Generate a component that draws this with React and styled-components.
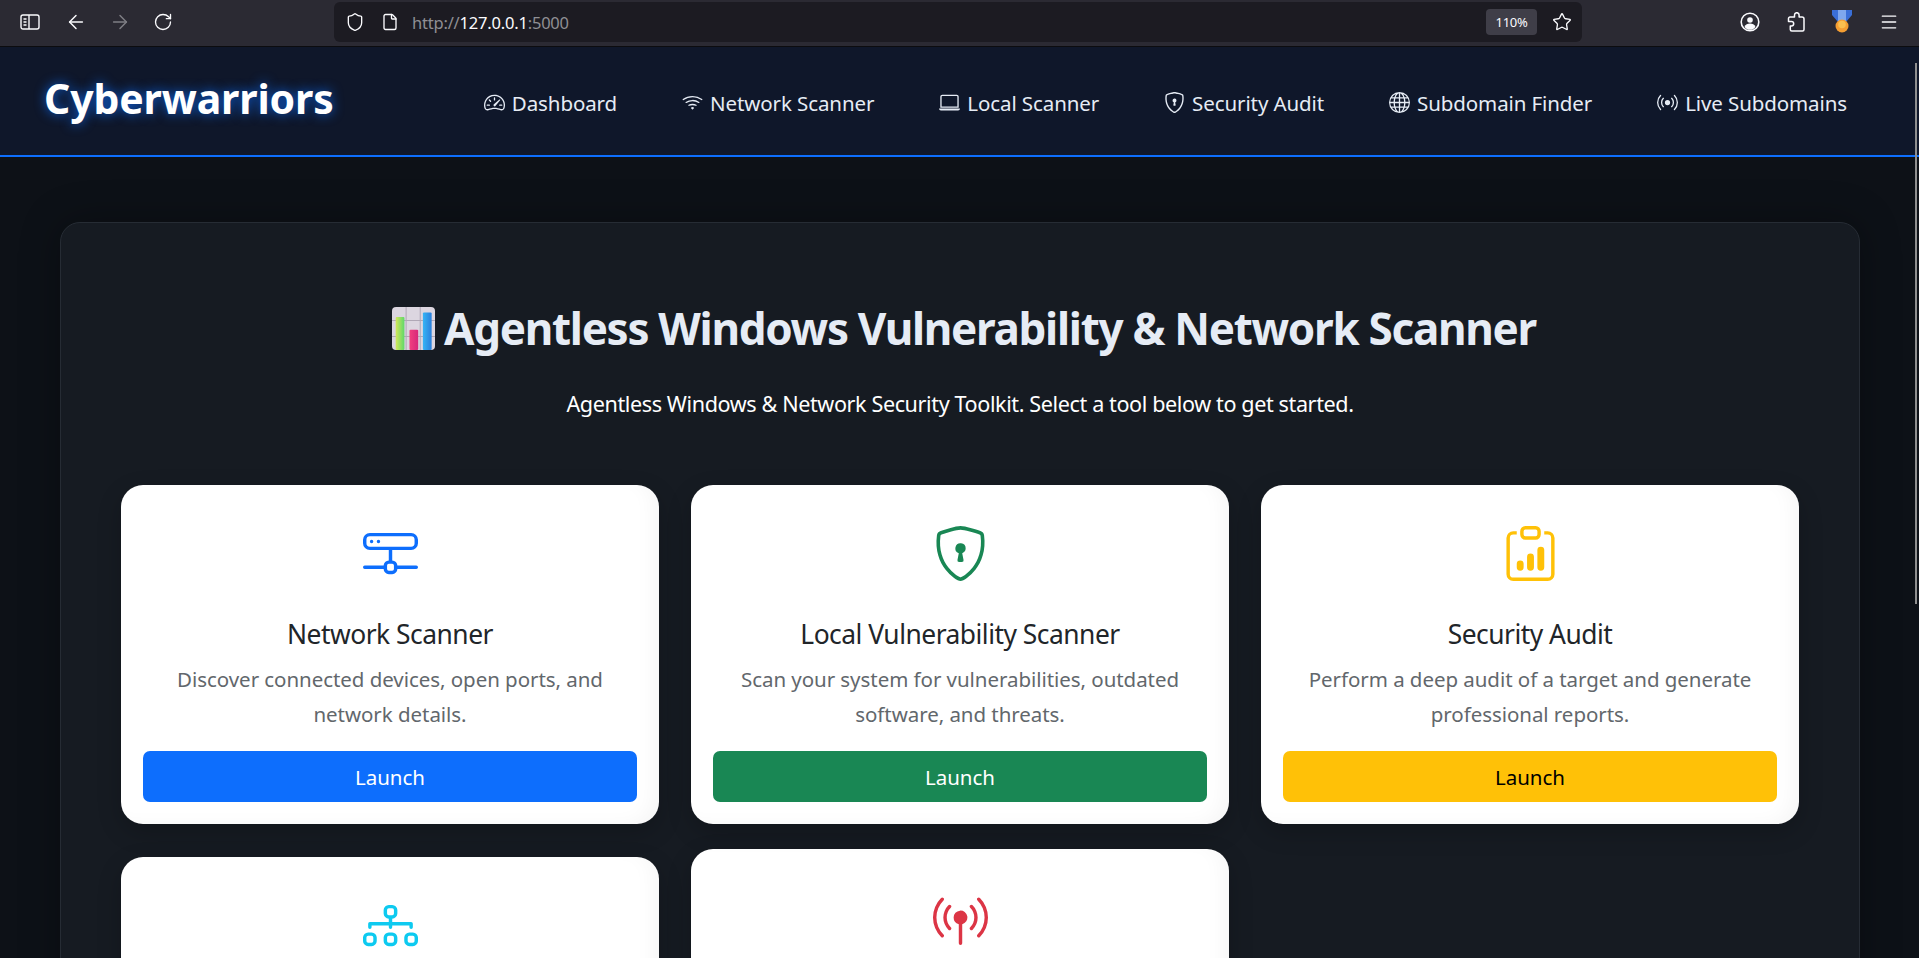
import React from "react";
import styled, { createGlobalStyle } from "styled-components";
import { ArrowLeft, ArrowRight, RotateCw, Shield, File, Star, Menu } from "lucide-react";
import {
  BsSpeedometer2,
  BsWifi,
  BsLaptop,
  BsShieldLock,
  BsGlobe,
  BsBroadcast,
  BsHddNetwork,
  BsClipboardData,
  BsDiagram3,
  BsBroadcastPin,
} from "react-icons/bs";

const GlobalStyle = createGlobalStyle`
  html, body {
    margin: 0;
    height: 100%;
    overflow: hidden;
    background: #0d1117;
  }
  * { box-sizing: border-box; }
`;

const navLinks = [
  { label: "Dashboard", icon: BsSpeedometer2 },
  { label: "Network Scanner", icon: BsWifi },
  { label: "Local Scanner", icon: BsLaptop },
  { label: "Security Audit", icon: BsShieldLock },
  { label: "Subdomain Finder", icon: BsGlobe },
  { label: "Live Subdomains", icon: BsBroadcast },
];

// the last two cards run past the fold, only their icons are in view
const tools = [
  {
    id: "network",
    title: "Network Scanner",
    desc: "Discover connected devices, open ports, and network details.",
    icon: BsHddNetwork,
    color: "#0d6efd",
  },
  {
    id: "local",
    title: "Local Vulnerability Scanner",
    desc: "Scan your system for vulnerabilities, outdated software, and threats.",
    icon: BsShieldLock,
    color: "#198754",
  },
  {
    id: "audit",
    title: "Security Audit",
    desc: "Perform a deep audit of a target and generate professional reports.",
    icon: BsClipboardData,
    color: "#ffc107",
    dark: true,
  },
  { id: "subdomain", icon: BsDiagram3, color: "#0dcaf0" },
  { id: "live", icon: BsBroadcastPin, color: "#dc3545", raised: true },
];

const SidebarIcon = () => (
  <svg width="20" height="20" viewBox="0 0 20 20" fill="none" stroke="#fbfbfe" strokeWidth="1.4">
    <rect x="1" y="3" width="18" height="14" rx="2" />
    <path d="M9 3v14" />
    <path d="M3.5 7h3M3.5 10h3M3.5 13h3" strokeWidth="1.6" />
  </svg>
);

const ProfileIcon = () => (
  <svg width="20" height="20" viewBox="0 0 20 20">
    <circle cx="10" cy="10" r="8.8" fill="none" stroke="#fbfbfe" strokeWidth="1.6" />
    <circle cx="10" cy="8" r="2.8" fill="#fbfbfe" />
    <path d="M4.5 15c1-2.4 3-3.4 5.5-3.4s4.500 1 5.500 3.400C14 17 12 17.800 10 17.800S6 17 4.500 15z" fill="#fbfbfe" />
  </svg>
);

const ExtensionIcon = () => (
  <svg width="18" height="20" viewBox="0 0 18 20" fill="none" stroke="#fbfbfe" strokeWidth="1.5" strokeLinejoin="round">
    <path d="M7.500 5V3a2.300 2.300 0 0 1 4.600 0v2H15a2 2 0 0 1 2 2v10.500a1.500 1.500 0 0 1-1.500 1.500H4.800a1.500 1.500 0 0 1-1.500-1.500V14h1.200a2.200 2.200 0 0 0 0-4.400H1.500V6.500A1.500 1.500 0 0 1 3 5z" />
  </svg>
);

const MedalIcon = () => (
  <svg width="20" height="24" viewBox="0 0 20 24">
    <path d="M0 0h20v5l-6 7H6L0 5z" fill="#3a6fd8" />
    <path d="M6 0h8v11H6z" fill="#7fa8ee" />
    <circle cx="10" cy="16" r="6.500" fill="#f59e32" />
    <circle cx="10" cy="14.500" r="3.800" fill="#fbbf4f" />
  </svg>
);

const ChartEmoji = () => (
  <ChartSvg viewBox="0 0 128 128">
    <defs>
      <linearGradient id="barGreen" x1="0" y1="0" x2="1" y2="0">
        <stop offset="0" stopColor="#d3e85a" />
        <stop offset="1" stopColor="#5fd86a" />
      </linearGradient>
      <linearGradient id="barPink" x1="0" y1="0" x2="1" y2="0">
        <stop offset="0" stopColor="#f0407f" />
        <stop offset="1" stopColor="#d8287a" />
      </linearGradient>
      <linearGradient id="barBlue" x1="0" y1="0" x2="1" y2="0">
        <stop offset="0" stopColor="#35b4f5" />
        <stop offset="1" stopColor="#2a7fdc" />
      </linearGradient>
    </defs>
    <rect width="128" height="128" rx="12" fill="#dcd6e0" />
    <path d="M42 0v128M84 0v128M0 40h128M0 88h128" stroke="#b0a8b6" strokeWidth="3" />
    <rect x="11" y="30" width="26" height="98" rx="3" fill="url(#barGreen)" />
    <rect x="52" y="68" width="26" height="60" rx="3" fill="url(#barPink)" />
    <rect x="92" y="16" width="26" height="112" rx="3" fill="url(#barBlue)" />
  </ChartSvg>
);

export default function App() {
  return (
    <>
      <GlobalStyle />
      <Page>
        <BrowserBar>
          <ToolGroup>
            <ToolButton><SidebarIcon /></ToolButton>
            <ToolButton><ArrowLeft size={22} strokeWidth={1.6} /></ToolButton>
            <ToolButton $muted><ArrowRight size={22} strokeWidth={1.6} /></ToolButton>
            <ToolButton><RotateCw size={20} strokeWidth={1.6} /></ToolButton>
          </ToolGroup>
          <UrlBar>
            <UrlIcons>
              <Shield size={20} strokeWidth={1.6} />
              <File size={18} strokeWidth={1.8} />
            </UrlIcons>
            <UrlText>
              http://<strong>127.0.0.1</strong>:5000
            </UrlText>
            <ZoomBadge>110%</ZoomBadge>
            <Star size={20} strokeWidth={1.6} />
          </UrlBar>
          <RightTools>
            <ProfileIcon />
            <ExtensionIcon />
            <MedalIcon />
            <Menu size={20} strokeWidth={1.6} />
          </RightTools>
        </BrowserBar>

        <Navbar>
          <Brand>Cyberwarriors</Brand>
          <NavList>
            {navLinks.map(({ label, icon: Icon }) => (
              <NavLink key={label} href="#">
                <Icon />
                {label}
              </NavLink>
            ))}
          </NavList>
        </Navbar>

        <Main>
          <Heading>
            <ChartEmoji />
            Agentless Windows Vulnerability &amp; Network Scanner
          </Heading>
          <Lead>Agentless Windows &amp; Network Security Toolkit. Select a tool below to get started.</Lead>
          <CardGrid>
            {tools.map(({ id, title, desc, icon: Icon, color, dark, raised }) => (
              <Card key={id} $raised={raised}>
                <CardIcon $color={color}><Icon /></CardIcon>
                {title && (
                  <>
                    <CardTitle>{title}</CardTitle>
                    <CardText>{desc}</CardText>
                    <LaunchButton $color={color} $dark={dark}>Launch</LaunchButton>
                  </>
                )}
              </Card>
            ))}
          </CardGrid>
        </Main>
        <ScrollThumb />
      </Page>
    </>
  );
}

const Page = styled.div`
  position: relative;
  height: 958px;
  overflow: hidden;
  background: #0d1117;
  font-family: "Noto Sans", "Open Sans", sans-serif;
`;
const BrowserBar = styled.div`
  height: 47px;
  display: flex;
  align-items: flex-start;
  background: #2b2a33;
  border-bottom: 1px solid #0c0c0f;
  color: #fbfbfe;
`;
const ToolGroup = styled.div`
  display: flex;
  align-items: center;
  gap: 22px;
  width: 334px;
  height: 44px;
  padding-left: 20px;
`;
const ToolButton = styled.span`
  display: flex;
  opacity: ${(p) => (p.$muted ? 0.4 : 1)};
  &:first-child {
    margin-right: 3px;
  }
`;
const UrlBar = styled.div`
  width: 1248px;
  height: 40px;
  margin-top: 2px;
  display: flex;
  align-items: center;
  padding: 0 10px 0 11px;
  background: #1c1b22;
  border-radius: 6px;
`;
const UrlIcons = styled.div`
  display: flex;
  align-items: center;
  gap: 16px;
`;
const UrlText = styled.div`
  flex: 1;
  margin-left: 13px;
  font-size: 16.5px;
  letter-spacing: -0.2px;
  color: #8f8f94;
  strong {
    font-weight: 400;
    color: #fbfbfe;
  }
`;
const ZoomBadge = styled.div`
  width: 51px;
  height: 26px;
  margin-right: 15px;
  display: flex;
  align-items: center;
  justify-content: center;
  border-radius: 4px;
  background: #3f3e48;
  font-size: 13px;
  letter-spacing: -0.3px;
`;
const RightTools = styled.div`
  flex: 1;
  height: 44px;
  display: flex;
  align-items: center;
  gap: 27px;
  padding-left: 158px;
`;
const Navbar = styled.nav`
  height: 110px;
  display: flex;
  align-items: center;
  justify-content: space-between;
  padding: 0 72px 0 44px;
  background: #0f172a;
  border-bottom: 2px solid #0d6efd;
`;
const Brand = styled.a`
  padding-bottom: 6px;
  font-size: 41px;
  font-weight: 700;
  letter-spacing: -0.15px;
  color: #fff;
  text-shadow: 0 0 12px rgba(13, 110, 253, 0.85);
`;
const NavList = styled.div`
  display: flex;
  align-items: center;
  gap: 65px;
  padding-top: 3px;
`;
const NavLink = styled.a`
  display: flex;
  align-items: center;
  gap: 7px;
  font-size: 20.5px;
  letter-spacing: -0.1px;
  color: #e6ecf5;
  text-decoration: none;
  white-space: nowrap;
  svg {
    width: 21px;
    height: 21px;
    flex-shrink: 0;
  }
`;
const Main = styled.main`
  width: 1800px;
  margin: 65px 0 0 60px;
  padding: 79px 60px 0;
  min-height: 900px;
  background: #161b22;
  border: 1px solid #262c34;
  border-radius: 20px;
  box-shadow: 0 0 40px rgba(0, 0, 0, 0.3);
`;
const Heading = styled.h1`
  display: flex;
  align-items: center;
  justify-content: center;
  gap: 9px;
  margin: 0;
  padding-left: 8px;
  font-size: 44px;
  line-height: 1.2;
  font-weight: 700;
  letter-spacing: -1.3px;
  color: #e6ecf5;
`;
const ChartSvg = styled.svg`
  width: 43px;
  height: 43px;
  flex-shrink: 0;
`;
const Lead = styled.p`
  margin: 34px 0 0;
  text-align: center;
  font-size: 21.6px;
  letter-spacing: -0.4px;
  line-height: 30px;
  color: #fff;
`;
const CardGrid = styled.div`
  display: grid;
  grid-template-columns: repeat(3, 1fr);
  gap: 33px 32px;
  margin-top: 66px;
`;
const Card = styled.div`
  display: flex;
  flex-direction: column;
  align-items: center;
  height: 339px;
  padding: 0 22px;
  background: #fff;
  border-radius: 22px;
  text-align: center;
  box-shadow: inset -12px -4px 20px -6px rgba(0, 0, 0, 0.04), 0 8px 24px rgba(0, 0, 0, 0.2);
  transform: ${(p) => (p.$raised ? "translateY(-8px)" : "none")};
`;
const CardIcon = styled.div`
  display: flex;
  margin-top: 41px;
  color: ${(p) => p.$color};
  svg {
    width: 55px;
    height: 55px;
  }
`;
const CardTitle = styled.h3`
  margin: 37px 0 0;
  font-size: 26.4px;
  line-height: 32px;
  font-weight: 400;
  letter-spacing: -0.5px;
  color: #212529;
`;
const CardText = styled.p`
  margin: 12px 0 0;
  height: 70px;
  font-size: 20.5px;
  line-height: 35px;
  letter-spacing: -0.05px;
  color: #62676c;
`;
const LaunchButton = styled.button`
  width: 100%;
  height: 51px;
  margin-top: 19px;
  padding-top: 3px;
  border: none;
  border-radius: 7px;
  font-family: inherit;
  font-size: 20.5px;
  background: ${(p) => p.$color};
  color: ${(p) => (p.$dark ? "#000" : "#fff")};
`;
const ScrollThumb = styled.div`
  position: absolute;
  top: 63px;
  right: 2px;
  width: 2px;
  height: 541px;
  background: #8f8f8f;
`;
